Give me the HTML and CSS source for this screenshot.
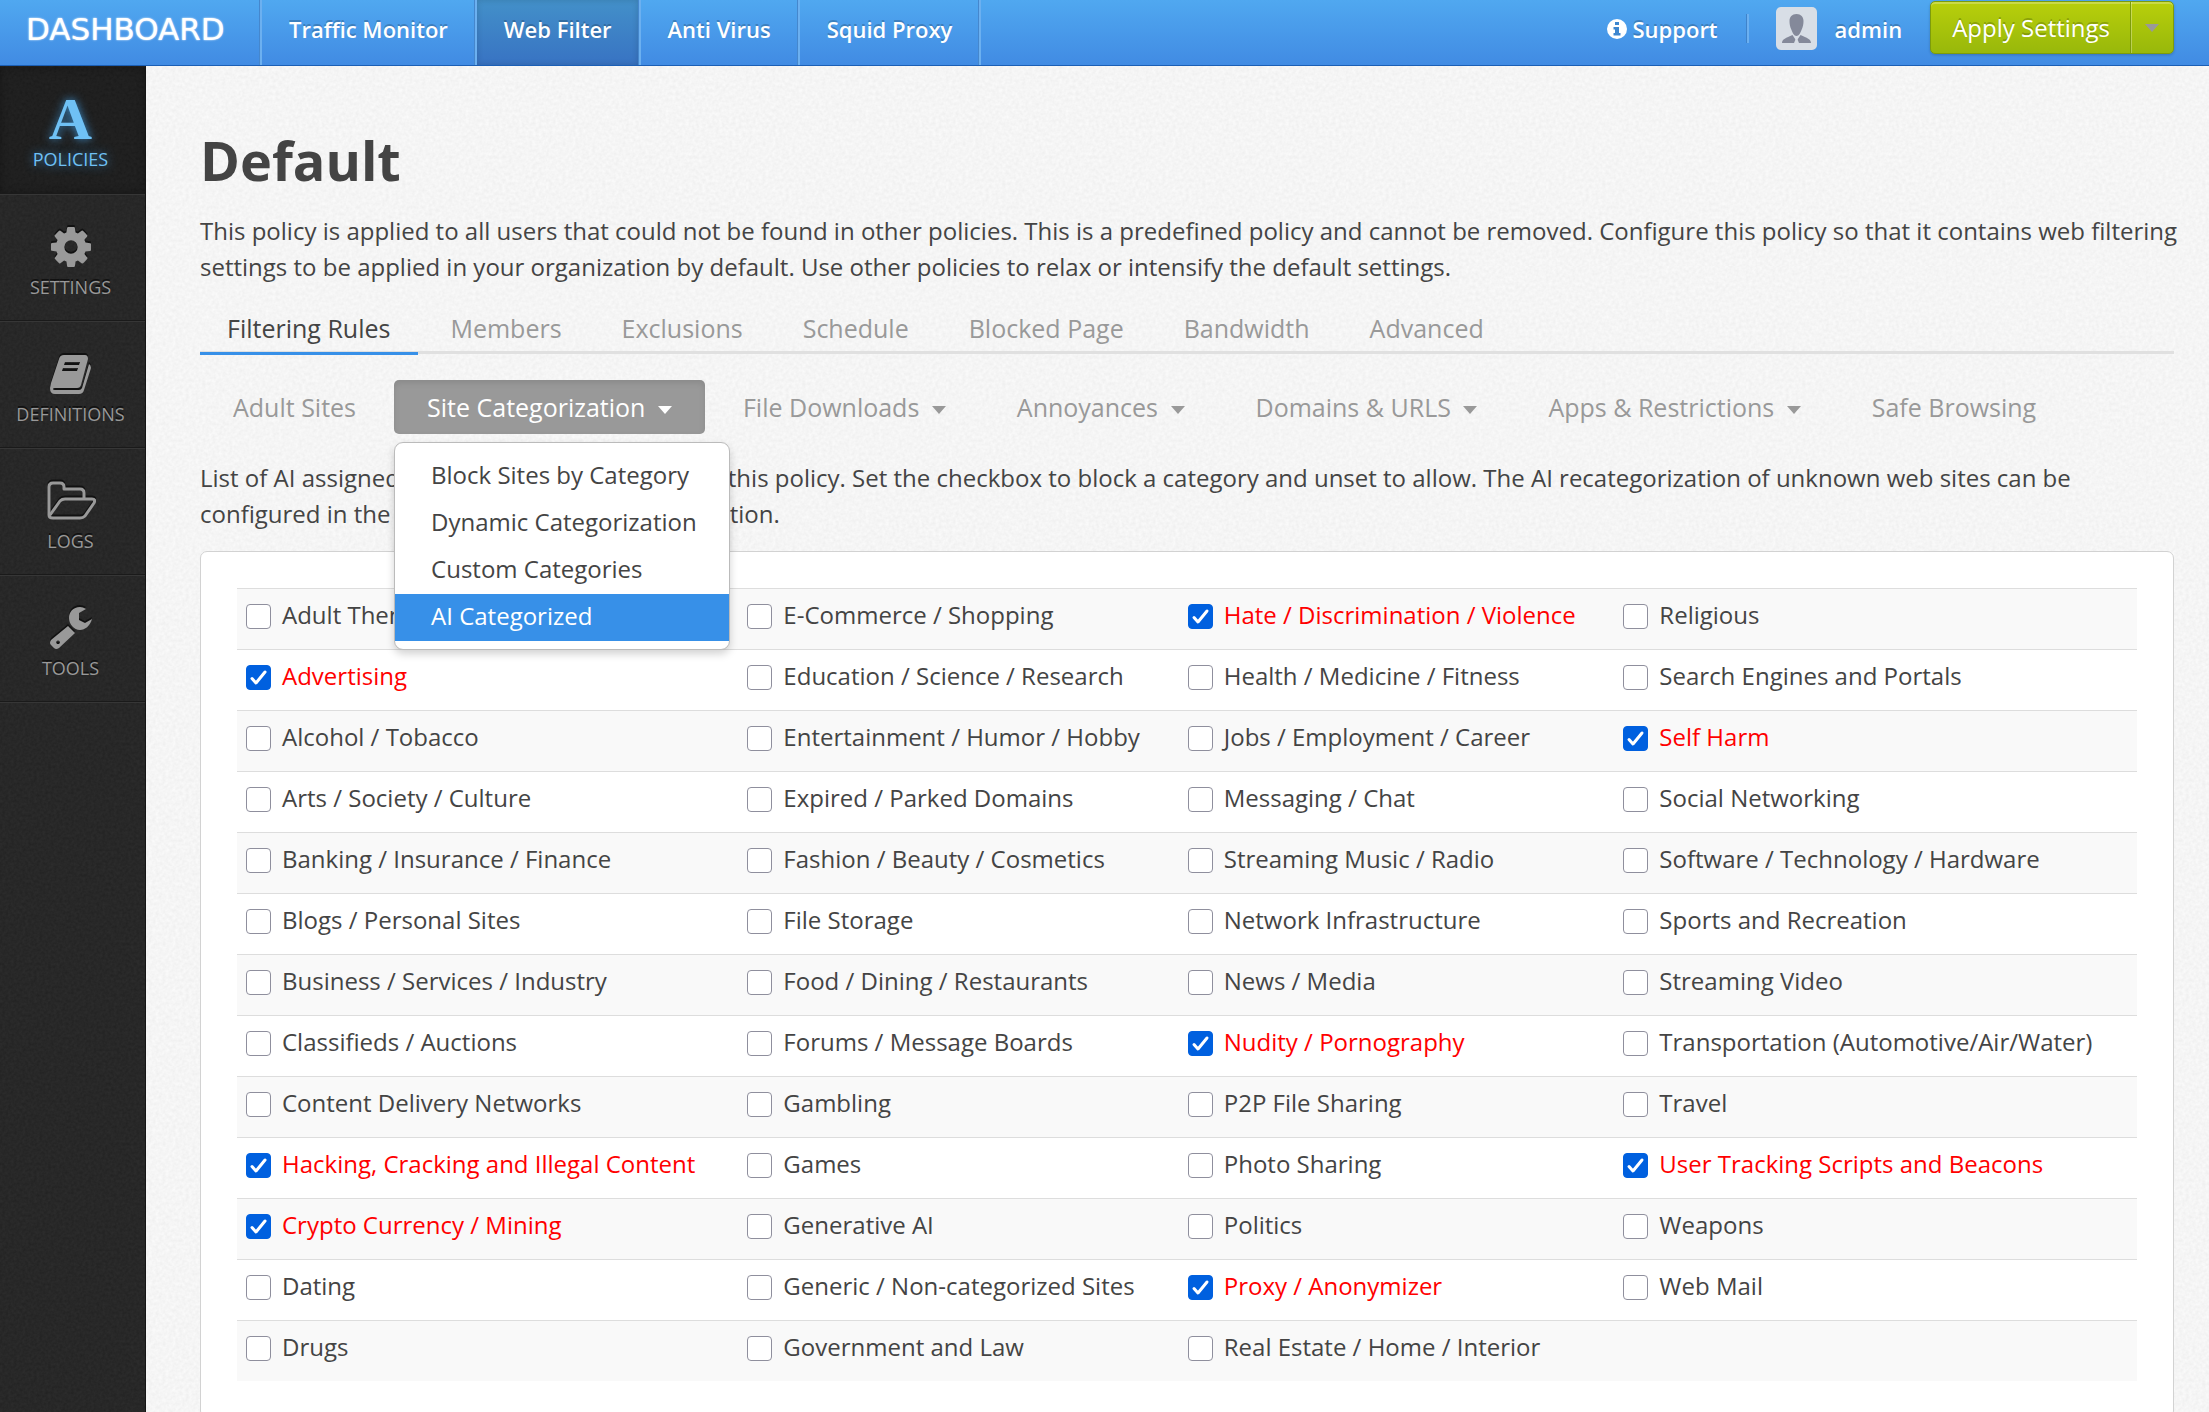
FILE: index.html
```
<!DOCTYPE html>
<html lang="en">

<head>
    <meta charset="UTF-8">
    <meta name="viewport" content="width=device-width, initial-scale=1.0">
    <title>Default - Web Filter</title>

    <link rel="stylesheet" href="styles.css">
</head>

<body>
    <header class="topbar">
        <a class="logo" href="#">DASHBOARD</a>
        <nav class="topnav">
            <a href="#">Traffic Monitor</a>
            <a href="#" class="active">Web Filter</a>
            <a href="#">Anti Virus</a>
            <a href="#">Squid Proxy</a>
        </nav>
        <div class="user">
            <a class="support" href="#">
                <svg viewBox="0 0 20 20" width="20" height="20">
                    <circle cx="10" cy="10" r="10" fill="#fff"></circle>
                    <path d="M8 3h4v3H8zM6.500 8H12v6h1.500v2.500h-7V14H8v-3.500H6.500z" fill="#3d86cf"></path>
                </svg>
                Support
            </a>
            <a class="admin" href="#">
                <svg viewBox="0 0 41 43" width="41" height="43">
                    <rect width="41" height="43" rx="5" fill="#d8dee6"></rect>
                    <path d="M13.500 14c0-4 2.500-7 7-7s7 3 7 7c0 3-.5 6-2 9-1 2.500-2.500 6-5 6s-4-3.500-5-6c-1.500-3-2-6-2-9z" fill="#84899a"></path>
                    <path d="M6 36c0-4 4-5 10.500-8l4 6 4-6C31 31 35 32 35 36z" fill="#84899a"></path>
                    <path d="M20.500 30l-2.500 6h5z" fill="#d8dee6"></path>
                </svg>
                admin
            </a>
            <div class="apply">
                <button type="button">Apply Settings</button>
                <button type="button" class="toggle" aria-label="More apply options"><span class="caret"></span></button>
            </div>
        </div>
    </header>

    <div class="wrapper">
        <nav class="sidebar">
            <a href="#" class="active">
                <span class="letter">A</span>
                POLICIES
            </a>
            <a href="#">
                <svg viewBox="0 0 1536 1536" width="40" height="40">
                    <path d="M1024 768q0-106-75-181t-181-75-181 75-75 181 75 181 181 75 181-75 75-181zM1536 659v222q0 12-8 23t-20 13l-185 28q-19 54-39 91 35 50 107 138 10 12 10 25t-9 23q-27 37-99 108t-94 71q-12 0-26-9l-138-108q-44 23-91 38-16 136-29 186-7 28-36 28H657q-14 0-24.500-8.500T621 1506l-28-184q-49-16-90-37l-141 107q-10 9-25 9-14 0-25-11-126-114-165-168-7-10-7-23 0-12 8-23 15-21 51-66.500t54-70.500q-27-50-41-99L29 913q-13-2-21-12.500T0 877V655q0-12 8-23t19-13l186-28q14-46 39-92-40-57-107-138-10-12-10-24 0-10 9-23 26-36 98.500-107.500T337 135q13 0 26 10l138 107q44-23 91-38 16-136 29-186 7-28 36-28h222q14 0 24.500 8.500T915 30l28 184q49 16 90 37l142-107q9-9 24-9 13 0 25 10 129 119 165 170 7 8 7 22 0 12-8 23-15 21-51 66.500t-54 70.500q26 50 41 98l183 28q13 2 21 12.500t8 23.500z"></path>
                </svg>
                SETTINGS
            </a>
            <a href="#">
                <svg viewBox="0 0 42 40" width="42" height="40">
                    <path fill-rule="evenodd" d="M14 1h21q3 0 3 4l-7 26q-1 3-4 3H5q-2 0-2 1t2 1h24q2 0 3-2l7-24q2 1 2 4l-7 22q-1 4-5 4H5q-5 0-5-6l1-5L9 5q1-4 5-4zM15 8l-1 3h15l1-3zM13 14l-1 3h15l1-3z"></path>
                </svg>
                DEFINITIONS
            </a>
            <a href="#">
                <svg viewBox="0 0 50 40" width="50" height="40" class="outline">
                    <path d="M3 34V6q0-4 4-4h7q4 0 4 4v2h16q4 0 4 4v6"></path>
                    <path d="M3 34q0 3 4 3h27q3 0 5-2l9-13q2-4-2-4H19q-3 0-5 2L4 34"></path>
                </svg>
                LOGS
            </a>
            <a href="#">
                <svg viewBox="0 0 42 42" width="42" height="42">
                    <path fill-rule="evenodd" d="M18 19l7 7L9 41q-3 2-5 0l-3-3q-2-2 0-5zM8 33.500a1.800 1.800 0 1 0 .1 0z"></path>
                    <path d="M36 2q-3-2-6-2C23 0 19 5 19 11s5 12 11 12c5 0 10-4 12-11l-7 4-6-3V6z"></path>
                </svg>
                TOOLS
            </a>
        </nav>

        <main class="content">
            <h1>Default</h1>
            <p>This policy is applied to all users that could not be found in other policies. This is a predefined policy and cannot be removed. Configure this policy so that it contains web filtering settings to be applied in your organization by default. Use other policies to relax or intensify the default settings.</p>

            <nav class="tabs">
                <a href="#" class="active">Filtering Rules</a>
                <a href="#">Members</a>
                <a href="#">Exclusions</a>
                <a href="#">Schedule</a>
                <a href="#">Blocked Page</a>
                <a href="#">Bandwidth</a>
                <a href="#">Advanced</a>
            </nav>

            <ul class="pills">
                <li><a href="#">Adult Sites</a></li>
                <li class="open">
                    <a href="#">Site Categorization <span class="caret"></span></a>
                    <ul class="dropdown">
                        <li><a href="#">Block Sites by Category</a></li>
                        <li><a href="#">Dynamic Categorization</a></li>
                        <li><a href="#">Custom Categories</a></li>
                        <li><a href="#" class="active">AI Categorized</a></li>
                    </ul>
                </li>
                <li><a href="#">File Downloads <span class="caret"></span></a></li>
                <li><a href="#">Annoyances <span class="caret"></span></a></li>
                <li><a href="#">Domains &amp; URLS <span class="caret"></span></a></li>
                <li><a href="#">Apps &amp; Restrictions <span class="caret"></span></a></li>
                <li><a href="#">Safe Browsing</a></li>
            </ul>

            <p>List of AI assigned categories to be checked for this policy. Set the checkbox to block a category and unset to allow. The AI recategorization of unknown web sites can be configured in the Dynamic Recategorization section.</p>

            <form class="card">
                <table class="categories">
                    <tr>
                        <td><label><input type="checkbox"><span>Adult Themes</span></label></td>
                        <td><label><input type="checkbox"><span>E-Commerce / Shopping</span></label></td>
                        <td><label><input type="checkbox" checked><span>Hate / Discrimination / Violence</span></label></td>
                        <td><label><input type="checkbox"><span>Religious</span></label></td>
                    </tr>
                    <tr>
                        <td><label><input type="checkbox" checked><span>Advertising</span></label></td>
                        <td><label><input type="checkbox"><span>Education / Science / Research</span></label></td>
                        <td><label><input type="checkbox"><span>Health / Medicine / Fitness</span></label></td>
                        <td><label><input type="checkbox"><span>Search Engines and Portals</span></label></td>
                    </tr>
                    <tr>
                        <td><label><input type="checkbox"><span>Alcohol / Tobacco</span></label></td>
                        <td><label><input type="checkbox"><span>Entertainment / Humor / Hobby</span></label></td>
                        <td><label><input type="checkbox"><span>Jobs / Employment / Career</span></label></td>
                        <td><label><input type="checkbox" checked><span>Self Harm</span></label></td>
                    </tr>
                    <tr>
                        <td><label><input type="checkbox"><span>Arts / Society / Culture</span></label></td>
                        <td><label><input type="checkbox"><span>Expired / Parked Domains</span></label></td>
                        <td><label><input type="checkbox"><span>Messaging / Chat</span></label></td>
                        <td><label><input type="checkbox"><span>Social Networking</span></label></td>
                    </tr>
                    <tr>
                        <td><label><input type="checkbox"><span>Banking / Insurance / Finance</span></label></td>
                        <td><label><input type="checkbox"><span>Fashion / Beauty / Cosmetics</span></label></td>
                        <td><label><input type="checkbox"><span>Streaming Music / Radio</span></label></td>
                        <td><label><input type="checkbox"><span>Software / Technology / Hardware</span></label></td>
                    </tr>
                    <tr>
                        <td><label><input type="checkbox"><span>Blogs / Personal Sites</span></label></td>
                        <td><label><input type="checkbox"><span>File Storage</span></label></td>
                        <td><label><input type="checkbox"><span>Network Infrastructure</span></label></td>
                        <td><label><input type="checkbox"><span>Sports and Recreation</span></label></td>
                    </tr>
                    <tr>
                        <td><label><input type="checkbox"><span>Business / Services / Industry</span></label></td>
                        <td><label><input type="checkbox"><span>Food / Dining / Restaurants</span></label></td>
                        <td><label><input type="checkbox"><span>News / Media</span></label></td>
                        <td><label><input type="checkbox"><span>Streaming Video</span></label></td>
                    </tr>
                    <tr>
                        <td><label><input type="checkbox"><span>Classifieds / Auctions</span></label></td>
                        <td><label><input type="checkbox"><span>Forums / Message Boards</span></label></td>
                        <td><label><input type="checkbox" checked><span>Nudity / Pornography</span></label></td>
                        <td><label><input type="checkbox"><span>Transportation (Automotive/Air/Water)</span></label></td>
                    </tr>
                    <tr>
                        <td><label><input type="checkbox"><span>Content Delivery Networks</span></label></td>
                        <td><label><input type="checkbox"><span>Gambling</span></label></td>
                        <td><label><input type="checkbox"><span>P2P File Sharing</span></label></td>
                        <td><label><input type="checkbox"><span>Travel</span></label></td>
                    </tr>
                    <tr>
                        <td><label><input type="checkbox" checked><span>Hacking, Cracking and Illegal Content</span></label></td>
                        <td><label><input type="checkbox"><span>Games</span></label></td>
                        <td><label><input type="checkbox"><span>Photo Sharing</span></label></td>
                        <td><label><input type="checkbox" checked><span>User Tracking Scripts and Beacons</span></label></td>
                    </tr>
                    <tr>
                        <td><label><input type="checkbox" checked><span>Crypto Currency / Mining</span></label></td>
                        <td><label><input type="checkbox"><span>Generative AI</span></label></td>
                        <td><label><input type="checkbox"><span>Politics</span></label></td>
                        <td><label><input type="checkbox"><span>Weapons</span></label></td>
                    </tr>
                    <tr>
                        <td><label><input type="checkbox"><span>Dating</span></label></td>
                        <td><label><input type="checkbox"><span>Generic / Non-categorized Sites</span></label></td>
                        <td><label><input type="checkbox" checked><span>Proxy / Anonymizer</span></label></td>
                        <td><label><input type="checkbox"><span>Web Mail</span></label></td>
                    </tr>
                    <tr>
                        <td><label><input type="checkbox"><span>Drugs</span></label></td>
                        <td><label><input type="checkbox"><span>Government and Law</span></label></td>
                        <td><label><input type="checkbox"><span>Real Estate / Home / Interior</span></label></td>
                        <td></td>
                    </tr>
                </table>
            </form>
        </main>
    </div>
</body>

</html>
```
FILE: styles.css
```
* {
    box-sizing: border-box;
}

body {
    display: flex;
    flex-direction: column;
    height: 100vh;
    margin: 0;
    overflow: hidden;
    font-family: 'Open Sans', 'Noto Sans', sans-serif;
    font-size: 24px;
    line-height: 36px;
    color: #444;
}

a {
    color: inherit;
    text-decoration: none;
}

.caret {
    display: inline-block;
    border: 7px solid transparent;
    border-top: 8px solid currentColor;
    border-bottom: none;
}

/* top bar */
.topbar {
    display: flex;
    height: 66px;
    flex-shrink: 0;
    border-bottom: 1px solid #1b5fb5;
    background: linear-gradient(#50a8f0, #418be3);
    color: #fff;
    font-size: 22px;
    font-weight: 600;
    text-shadow: 0 -2px 0 rgba(0, 0, 0, .2);
}

.logo {
    width: 259px;
    padding: 11px 0 0 26px;
    font-family: 'DejaVu Sans', sans-serif;
    font-size: 31px;
    font-weight: 400;
    text-shadow: 0 0 2px #fff;
}

.topnav {
    display: flex;
    border-left: 1px solid #4587cd;
}

.topnav a {
    padding: 11px 26px 0 27px;
    border-left: 2px solid #6cb0f0;
    border-right: 1px solid #4587cd;
}

.topnav a.active {
    background: linear-gradient(#4390c9, #3873c3);
    box-shadow: inset 0 0 6px rgba(0, 0, 0, .15);
}

.topnav::after {
    content: '';
    border-left: 2px solid #6cb0f0;
}

.user {
    display: flex;
    align-items: flex-start;
    margin-left: auto;
    padding-right: 35px;
}

.support {
    display: flex;
    align-items: center;
    gap: 5px;
    margin-top: 11px;
}

.admin {
    display: flex;
    align-items: center;
    gap: 18px;
    margin: 7px 28px 0 28px;
    position: relative;
    padding-left: 30px;
}

.admin::before {
    content: '';
    position: absolute;
    left: 0;
    top: 7px;
    width: 2px;
    height: 29px;
    border-left: 1px solid #3f83cb;
    background: #6cb0f0;
}

.apply {
    display: flex;
    height: 53px;
    margin-top: 1px;
    border: 1px solid #7d9c0a;
    border-radius: 5px;
    background: linear-gradient(#b8cf0b, #98b80b);
    box-shadow: inset 0 2px 0 rgba(255, 255, 255, .25), 0 1px 3px rgba(0, 0, 0, .2);
}

.apply button {
    padding: 0 20px 0 21px;
    border: none;
    background: none;
    color: #fff;
    font: inherit;
    font-size: 24px;
    font-weight: 400;
    text-shadow: inherit;
}

.apply .toggle {
    display: flex;
    align-items: center;
    padding: 0 14px;
    border-left: 1px solid #7d9c0a;
    box-shadow: inset 1px 0 0 rgba(255, 255, 255, .3);
    color: #999;
}

/* page */
.wrapper {
    display: flex;
    flex: 1;
    min-height: 0;
}

.sidebar {
    width: 146px;
    flex-shrink: 0;
    border-right: 1px solid #151515;
    background: url("data:image/svg+xml,%3Csvg xmlns='http://www.w3.org/2000/svg' width='200' height='200'%3E%3Cfilter id='n'%3E%3CfeTurbulence type='fractalNoise' baseFrequency='.35' numOctaves='2' stitchTiles='stitch'/%3E%3CfeColorMatrix values='0 0 0 0 0 0 0 0 0 0 0 0 0 0 0 .3 0 0 0 -.05'/%3E%3C/filter%3E%3Crect width='200' height='200' filter='url(%23n)'/%3E%3C/svg%3E") #2c2c2c;
}

.sidebar a {
    display: flex;
    flex-direction: column;
    align-items: center;
    height: 127px;
    padding: 31px 4px 0 0;
    border-top: 1px solid #363636;
    border-bottom: 1px solid #1a1a1a;
    color: #999;
    font-size: 18px;
    line-height: 24px;
    text-shadow: 0 -2px 0 #111;
}

.sidebar a:last-child {
    box-shadow: 0 1px 0 #363636;
}

.sidebar svg {
    height: 42px;
    margin-bottom: 7px;
    fill: #999;
    filter: drop-shadow(0 -2px 0 #111);
}

.sidebar .outline {
    fill: none;
    stroke: #999;
    stroke-width: 3;
    stroke-linejoin: round;
}

.sidebar .active {
    height: 128px;
    border-top-color: transparent;
    background: rgba(0, 0, 0, .2);
    box-shadow: inset 0 0 8px rgba(0, 0, 0, .3);
    color: #6fc1f5;
    text-shadow: 0 0 10px #3c8fce;
}

.letter {
    height: 42px;
    margin-bottom: 7px;
    font-family: 'Liberation Serif', serif;
    font-size: 60px;
    font-weight: 700;
    line-height: 42px;
}

.content {
    flex: 1;
    padding: 54px 35px 36px 54px;
    overflow-y: auto;
    scrollbar-width: none;
    background: url("data:image/svg+xml,%3Csvg xmlns='http://www.w3.org/2000/svg' width='200' height='200'%3E%3Cfilter id='n'%3E%3CfeTurbulence type='fractalNoise' baseFrequency='.3' numOctaves='2' stitchTiles='stitch'/%3E%3CfeColorMatrix values='0 0 0 0 0 0 0 0 0 0 0 0 0 0 0 .06 0 0 0 -.01'/%3E%3C/filter%3E%3Crect width='200' height='200' filter='url(%23n)'/%3E%3C/svg%3E") #fafafa;
}

h1 {
    margin: 0 0 12px;
    font-size: 54px;
    line-height: 81px;
}

p {
    margin: 0 -9px 0 0;
}

.tabs {
    display: flex;
    gap: 5px;
    margin: 18px 0 26px;
    border-bottom: 3px solid #e0e0e0;
    color: #999;
    font-size: 25px;
}

.tabs a {
    margin-bottom: -4px;
    padding: 7px 28px 6px 27px;
    border-bottom: 3px solid transparent;
}

.tabs .active {
    border-color: #3790e8;
    color: #444;
}

.pills {
    display: flex;
    gap: 5px;
    margin: 0 0 26px;
    padding: 0;
    list-style: none;
    color: #999;
    font-size: 25px;
}

.pills > li {
    position: relative;
}

.pills > li > a {
    display: block;
    padding: 9px 33px;
    border-radius: 5px;
}

.pills .caret {
    margin: 0 0 3px 6px;
}

.pills .open > a {
    background: #999;
    box-shadow: inset 0 3px 6px rgba(0, 0, 0, .1);
    color: #fff;
}

.dropdown {
    position: absolute;
    top: 62px;
    left: 0;
    width: 336px;
    margin: 0;
    padding: 10px 0 8px;
    border: 1px solid #bbb;
    border-radius: 9px;
    background: #fff;
    box-shadow: 0 4px 9px rgba(0, 0, 0, .18);
    list-style: none;
    color: #444;
    font-size: 24px;
    white-space: nowrap;
}

.dropdown a {
    display: block;
    height: 47px;
    padding: 4px 36px 0;
}

.dropdown .active {
    background: #3790e8;
    color: #fff;
}

.card {
    margin-top: 19px;
    padding: 36px;
    border: 1px solid #d2d2d2;
    border-radius: 7px;
    background: #fff;
}

.categories {
    width: 100%;
    border-spacing: 0;
}

.categories td {
    padding: 8px 9px 16px;
    border-top: 1px solid #ddd;
}

.categories tr:nth-child(odd) {
    background: #f9f9f9;
}

.categories label {
    display: flex;
    align-items: center;
    gap: 11px;
}

.categories input {
    width: 25px;
    height: 25px;
    margin: 2px 0 0;
    appearance: none;
    border: 1px solid #8f8f9d;
    border-radius: 4px;
    background: #fff;
}

.categories input:checked {
    border-color: #0060df;
    background: #0060df url("data:image/svg+xml,%3Csvg xmlns='http://www.w3.org/2000/svg' viewBox='0 0 23 23'%3E%3Cpath d='M5 12.500l4 4.500 9-11' fill='none' stroke='%23fff' stroke-width='3' stroke-linecap='round' stroke-linejoin='round'/%3E%3C/svg%3E");
}

.categories input:checked + span {
    color: #f00;
}
```
